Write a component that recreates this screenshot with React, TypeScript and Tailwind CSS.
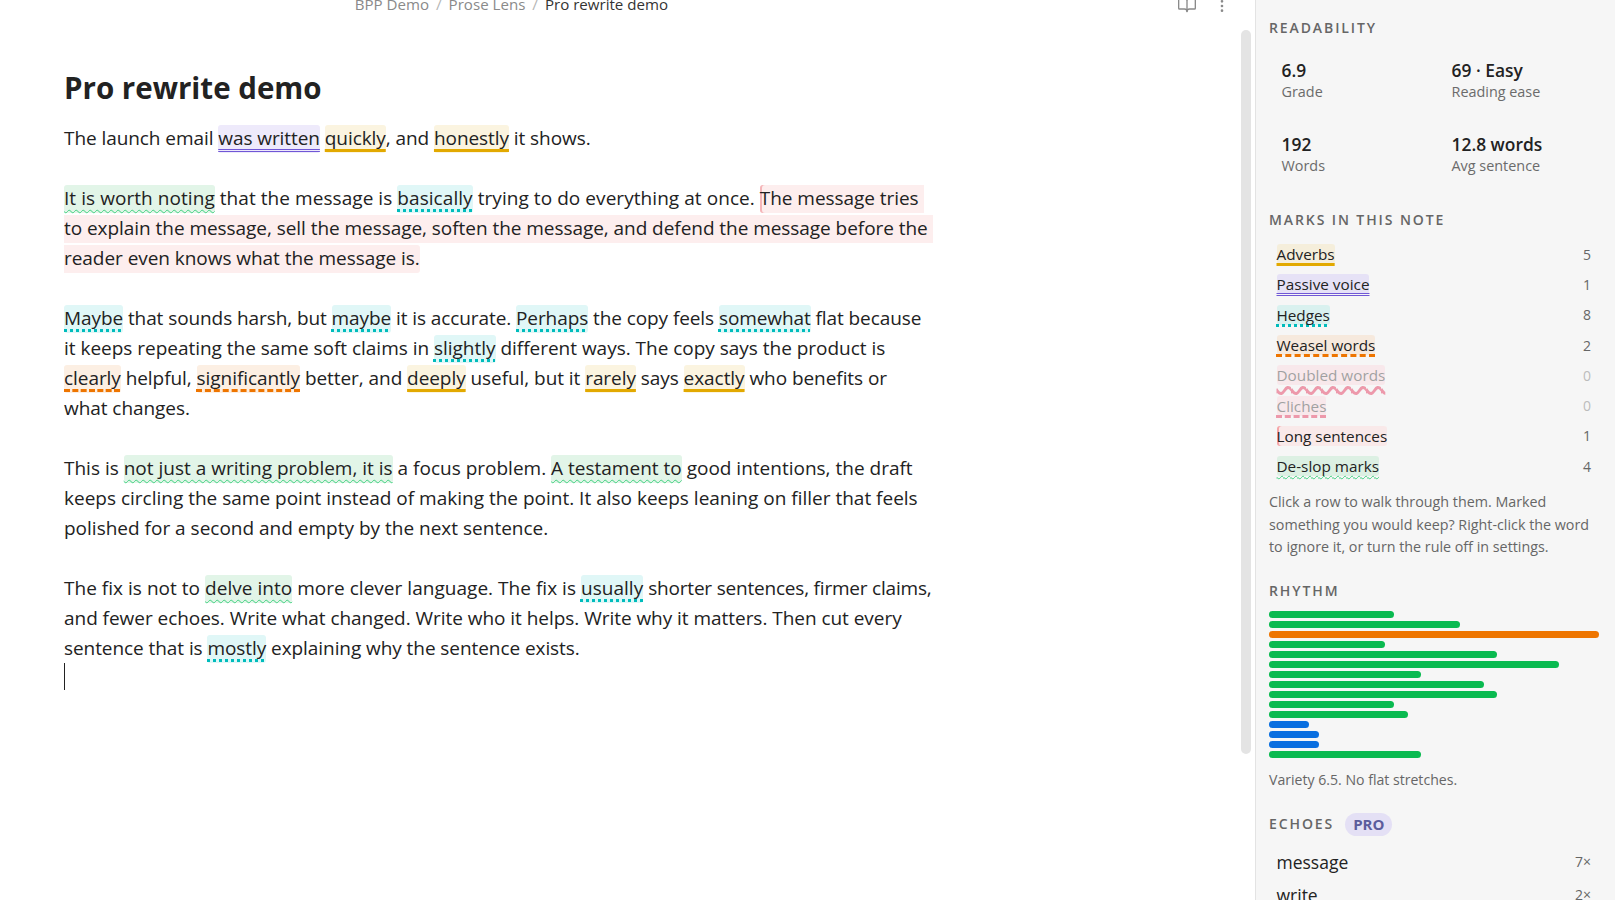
import React from "react";
import { BookOpen, EllipsisVertical } from "lucide-react";

const base = "rounded-[3px] pb-[2px] [text-decoration-skip-ink:none] underline-offset-[4px]";
const Adv = ({ c }: { c: string }) => (
  <span className={`${base} bg-[#fbf4e0] underline decoration-[#e2a900] decoration-[3px]`}>{c}</span>
);
const Pas = ({ c }: { c: string }) => (
  <span className={`${base} bg-[#eeeafb] underline decoration-double decoration-[#7057d6] decoration-[1px]`}>{c}</span>
);
const Hed = ({ c }: { c: string }) => (
  <span className={`${base} bg-[#e0f7f7] underline decoration-dotted decoration-[#00bcbc] decoration-[3px]`}>{c}</span>
);
const Wea = ({ c }: { c: string }) => (
  <span className={`${base} bg-[#fcefe3] underline decoration-dashed decoration-[#ee7500] decoration-[3px]`}>{c}</span>
);
const Slop = ({ c }: { c: string }) => (
  <span className={`${base} bg-[#e2f5e8] underline decoration-wavy decoration-[#3fd07f] decoration-[1px] underline-offset-[3px]`}>{c}</span>
);

const Heading = ({ children, className = "" }: { children: React.ReactNode; className?: string }) => (
  <h3 className={`text-[14px] leading-[18px] font-semibold tracking-[1.9px] text-[#666666] ${className}`}>{children}</h3>
);

const Stat = ({ v, l }: { v: string; l: string }) => (
  <div className="pl-[12.5px]">
    <div className="text-[17.4px] leading-[24px] font-semibold text-[#222222]">{v}</div>
    <div className="text-[14.4px] leading-[19px] text-[#6b6b6b]">{l}</div>
  </div>
);

const Row = ({ label, n, mark, off }: { label: string; n: number; mark: string; off?: boolean }) => (
  <div className={`flex h-[30.3px] items-center justify-between pl-[7.5px] ${off ? "opacity-40" : ""}`}>
    <span className={`rounded-[3px] text-[15.3px] leading-[20px] text-[#222222] [text-decoration-skip-ink:none] underline-offset-[3px] ${mark}`}>{label}</span>
    <span className="text-[14px] text-[#666666]">{n}</span>
  </div>
);

const bars: [number, string][] = [
  [125, "bg-[#0aba50]"], [191, "bg-[#0aba50]"], [330, "bg-[#ee7500]"], [116, "bg-[#0aba50]"], [228, "bg-[#0aba50]"],
  [290, "bg-[#0aba50]"], [152, "bg-[#0aba50]"], [215, "bg-[#0aba50]"], [228, "bg-[#0aba50]"], [125, "bg-[#0aba50]"],
  [139, "bg-[#0aba50]"], [40, "bg-[#0a6fe0]"], [50, "bg-[#0a6fe0]"], [50, "bg-[#0a6fe0]"], [152, "bg-[#0aba50]"],
];

export default function App() {
  return (
    <div className="flex h-[900px] w-[1615px] overflow-hidden bg-white font-['Open_Sans',sans-serif] text-[#222222]">
      <main className="flex h-full w-[1241px] flex-col">
        <header className="flex h-[14px] items-end overflow-hidden">
          <div className="flex w-[1022px] justify-end text-[15.1px] leading-[20px] text-[#8a8a8a]">
            <span>BPP Demo</span>
            <span className="mx-[7px] text-[#b5b5b5]">/</span>
            <span>Prose Lens</span>
            <span className="mx-[7px] text-[#b5b5b5]">/</span>
            <span className="pr-[354px] text-[#333333]">Pro rewrite demo</span>
          </div>
          <div className="ml-[155px] flex items-end gap-[17px] text-[#8a8a8a]">
            <BookOpen size={20} strokeWidth={1.6} />
            <EllipsisVertical size={16} strokeWidth={2} />
          </div>
        </header>
        <article className="flex-1 whitespace-nowrap pl-[64px] text-[19px] leading-[30px]">
          <h1 className="mt-[52px] text-[29.5px] leading-[44px] font-bold text-[#222222]">Pro rewrite demo</h1>
          <p className="mt-[13px] tracking-[-0.07px]">
            The launch email <Pas c="was written" /> <Adv c="quickly" />, and <Adv c="honestly" /> it shows.
          </p>
          <p className="mt-[30px] tracking-[-0.05px]">
            <span className="tracking-[0.06px]">
              <Slop c="It is worth noting" /> that the message is <Hed c="basically" /> trying to do everything at once.{" "}
            </span>
            <span className="rounded-[3px] bg-[#fdeeee] pb-[2px] shadow-[inset_2px_0_0_#f5b5b8]">
              The message tries{"\u00a0"}
              <br />
              to explain the message, sell the message, soften the message, and defend the message before the{"\u00a0"}
              <br />
              reader even knows what the message is.
            </span>
          </p>
          <p className="mt-[30px] tracking-[-0.06px]">
            <span className="tracking-[-0.085px]">
              <Hed c="Maybe" /> that sounds harsh, but <Hed c="maybe" /> it is accurate. <Hed c="Perhaps" /> the copy feels <Hed c="somewhat" /> flat because
            </span>
            <br />
            <span className="tracking-[-0.02px]">
              it keeps repeating the same soft claims in <Hed c="slightly" /> different ways. The copy says the product is
            </span>
            <br />
            <Wea c="clearly" /> helpful, <Wea c="significantly" /> better, and <Adv c="deeply" /> useful, but it <Adv c="rarely" /> says <Adv c="exactly" /> who benefits or
            <br />
            what changes.
          </p>
          <p className="mt-[30px]">
            This is <Slop c="not just a writing problem, it is" /> a focus problem. <Slop c="A testament to" /> good intentions, the draft
            <br />
            keeps circling the same point instead of making the point. It also keeps leaning on filler that feels
            <br />
            polished for a second and empty by the next sentence.
          </p>
          <p className="mt-[30px] tracking-[-0.07px]">
            <span className="tracking-[0.03px]">
              The fix is not to <Slop c="delve into" /> more clever language. The fix is <Hed c="usually" />{" "}
            </span>
            <span className="tracking-[-0.2px]">shorter sentences, firmer claims,</span>
            <br />
            <span className="tracking-[-0.04px]">and fewer echoes. Write what changed. Write who it helps. Write why it matters. Then cut every</span>
            <br />
            sentence that is <Hed c="mostly" /> explaining why the sentence exists.
          </p>
          <div className="h-[27px] w-px bg-[#222222]" />
        </article>
      </main>
      <div className="w-[14px] shrink-0 pt-[30px]">
        <div className="h-[724px] w-[10px] rounded-full bg-[#e4e4e4]" />
      </div>
      <aside className="flex h-full flex-1 flex-col overflow-hidden border-l border-[#e3e3e3] bg-[#f6f6f6] pl-[13px] pr-[24px] pt-[19px]">
        <Heading>READABILITY</Heading>
        <div className="mt-[21px] grid grid-cols-[170px_1fr] gap-y-[31px]">
          <Stat v="6.9" l="Grade" />
          <Stat v="69 · Easy" l="Reading ease" />
          <Stat v="192" l="Words" />
          <Stat v="12.8 words" l="Avg sentence" />
        </div>
        <Heading className="mt-[36px]">MARKS IN THIS NOTE</Heading>
        <div className="mt-[10px]">
          <Row label="Adverbs" n={5} mark="bg-[#f5eedb] underline decoration-[#e2a900] decoration-[3px]" />
          <Row label="Passive voice" n={1} mark="bg-[#e6e2f6] underline decoration-double decoration-[#7057d6] decoration-[1px]" />
          <Row label="Hedges" n={8} mark="bg-[#d9f1ef] underline decoration-dotted decoration-[#00bcbc] decoration-[3px]" />
          <Row label="Weasel words" n={2} mark="bg-[#f6e9dd] underline decoration-dashed decoration-[#ee7500] decoration-[3px]" />
          <Row label="Doubled words" n={0} off mark="bg-[#fbd5dc] underline decoration-wavy decoration-[#e0103c] decoration-[2.5px] underline-offset-[5px]" />
          <Row label="Cliches" n={0} off mark="bg-[#fbd5dc] underline decoration-dashed decoration-[#e0103c] decoration-[3px]" />
          <Row label="Long sentences" n={1} mark="bg-[#f9e9e9] shadow-[inset_2px_0_0_#f5a5a8]" />
          <Row label="De-slop marks" n={4} mark="bg-[#dcf0e3] underline decoration-wavy decoration-[#3fd07f] decoration-[1px]" />
        </div>
        <p className="mt-[10px] whitespace-nowrap text-[14.3px] leading-[22.4px] text-[#666666]">
          Click a row to walk through them. Marked
          <br />
          something you would keep? Right-click the word
          <br />
          to ignore it, or turn the rule off in settings.
        </p>
        <Heading className="mt-[23px]">RHYTHM</Heading>
        <div className="mt-[11px] flex flex-col gap-[3px]">
          {bars.map(([w, c], i) => (
            <div key={i} className={`h-[7px] rounded-full ${c}`} style={{ width: w }} />
          ))}
        </div>
        <p className="mt-[12px] text-[14.1px] leading-[20px] text-[#666666]">Variety 6.5. No flat stretches.</p>
        <div className="mt-[23px] flex items-center gap-[11px]">
          <Heading>ECHOES</Heading>
          <span className="rounded-full bg-[#e4e0f5] px-[8px] text-[15px] leading-[23px] font-bold text-[#5c5c9c]">PRO</span>
        </div>
        <div className="mt-[13px] flex h-[30px] items-center justify-between pl-[7.5px]">
          <span className="text-[17.5px] text-[#222222]">message</span>
          <span className="text-[14px] text-[#666666]">7×</span>
        </div>
        <div className="mt-[5px] flex h-[30px] shrink-0 items-center justify-between pl-[7.5px]">
          <span className="text-[17.5px] text-[#222222]">write</span>
          <span className="text-[14px] text-[#666666]">2×</span>
        </div>
      </aside>
    </div>
  );
}
